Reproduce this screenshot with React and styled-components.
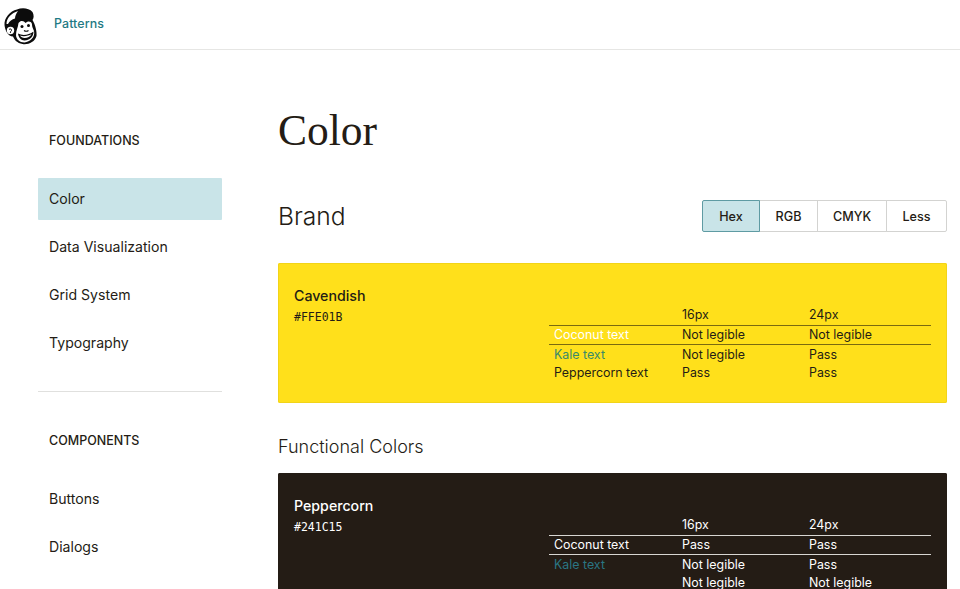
import React from 'react';
import styled, { createGlobalStyle } from 'styled-components';

const Global = createGlobalStyle`
  html, body { margin: 0; padding: 0; background: #fff; height: 100%; overflow: hidden; }
  body { font-family: Inter, "Liberation Sans", sans-serif; color: #241c15; }
`;
const Page = styled.div`width: 960px; height: 589px; overflow: hidden;`;
const Header = styled.header`
  height: 49px; border-bottom: 1px solid #e6e6e4; display: flex; align-items: center; gap: 14px;
`;
const Logo = styled.svg`width: 40px; height: 46px; display: block; flex: none; margin-top: 3px;`;
const HeaderLink = styled.a`font-size: 12.4px; font-weight: 500; color: #1f7a84; letter-spacing: 0.1px; margin-top: -3px;`;
const Body = styled.div`display: flex; padding: 0 13px 0 38px; gap: 56px;`;
const Side = styled.nav`width: 184px; flex: none; padding-top: 83px;`;
const SideHead = styled.h4`
  margin: 0; padding-left: 11px; font-size: 12.5px; line-height: 16px; font-weight: 500; color: #241c15;
`;
const SideList = styled.div`display: flex; flex-direction: column; gap: 6px; margin-top: 29px;`;
const SideItem = styled.a`
  height: 42px; box-sizing: border-box; display: flex; align-items: center; padding: 0 0 2px 11px; font-size: 14.1px; font-weight: 400; color: #241c15; border-radius: 1px;
  background: ${p => p.$active ? '#c9e4e8' : 'transparent'};
`;
const Rule = styled.hr`border: 0; border-top: 1px solid #e0e0de; margin: 27px 0 41px;`;
const Main = styled.main`flex: 1; min-width: 0; padding-top: 52px;`;
const Title = styled.h1`
  margin: 0; font-family: "Liberation Serif", serif; font-size: 43.5px; line-height: 56px; font-weight: 400; color: #241c15;
`;
const BrandRow = styled.div`display: flex; justify-content: space-between; align-items: center; margin-top: 42px; height: 32px;`;
const H2 = styled.h2`margin: 0; font-size: 24.6px; line-height: 32px; font-weight: 300; color: #241c15;`;
const Toggle = styled.div`display: flex;`;
const ToggleBtn = styled.button`
  height: 32px; width: ${p => p.$w}px; margin-left: -1px; padding: 0; box-sizing: border-box; font: 500 12.6px Inter, sans-serif; color: #241c15;
  background: ${p => p.$active ? '#c9e4e8' : '#fff'};
  border: 1px solid ${p => p.$active ? '#5f9ba3' : '#d3d3d1'};
  position: relative; z-index: ${p => p.$active ? 1 : 0};
  &:first-child { border-radius: 2px 0 0 2px; }
  &:last-child { border-radius: 0 2px 2px 0; }
`;
const Card = styled.section`
  margin-top: ${p => p.$mt}px; height: 140px; box-sizing: border-box; border-radius: 2px; background: ${p => p.$bg}; color: ${p => p.$fg};
  box-shadow: inset 0 0 0 1px ${p => p.$edge};
  padding: 23px 16px 0; display: grid; grid-template-columns: 1fr 382px;
`;
const CardName = styled.div`font-size: 14.2px; line-height: 19px; font-weight: 500;`;
const Hex = styled.div`font-family: "DejaVu Sans Mono", monospace; font-size: 11.5px; line-height: 14px; margin-top: 5px;`;
const CardHead = styled.div``;
const Table = styled.table`
  width: 382px; height: max-content; margin-top: 20px; border-collapse: collapse; font-size: 12.4px; font-weight: 400; table-layout: fixed;
  td { padding: 0 0 0 5px; height: 18.7px; line-height: 18px; }
  td:nth-child(1) { width: 123px; }
  td:nth-child(2) { width: 122px; }
`;
const Row = styled.tr`
  border-bottom: ${p => p.$line ? `1px solid ${p.$line}` : '0'};
`;
const Label = styled.td`color: ${p => p.$c};`;
const H3 = styled.h3`margin: 32px 0 0; font-size: 18px; line-height: 24px; font-weight: 300; color: #241c15;`;

const Monkey = () => (
  <Logo viewBox="0 0 40 46">
    <path d="M4.500 22C4 15 10 8 17 6.500C22 4.500 29 5 32.500 9C34 12 34 15 32.500 17C35.500 22 37 29 36.500 33C35 39 28 42 22.500 41C17 40 14.500 37 13 33.500C8 33.500 5 27.500 4.500 22Z" fill="#0c0c0c"/>
    <path d="M6.500 21C6.500 15 11.500 10 18 8C16 10.500 15 13.500 15 15.500C12 16.500 9.500 18 8 21Z" fill="#fff"/>
    <circle cx="10.500" cy="27.500" r="3.700" fill="#fff"/>
    <path d="M9 26.500C10 25.500 12 26 11.500 27.500C11 28.500 10 28.500 10.500 30" stroke="#0c0c0c" strokeWidth="1" fill="none"/>
    <path d="M18.500 20C20.500 17 24 17.500 25.500 20C27.500 17.500 32 18 32 21.500C32 24 33 25.500 34 28C35.500 34 30 39 24.500 39.500C19.500 39.500 16 36 16 32C16 27.500 18 24.500 18.500 20Z" fill="#fff"/>
    <path d="M18 30.500C22.500 33 29 32 33.500 28.500C33.500 34 29.500 37.500 24.500 37.500C21 37.500 18.500 34.500 18 30.500Z" fill="#0c0c0c"/>
    <path d="M20 32.500C23.500 33.800 28.500 33 31.500 31C30.500 33.500 27.500 35 24.500 35C22.500 35 20.800 34 20 32.500Z" fill="#fff"/>
    <circle cx="22" cy="23.500" r="1.500" fill="#0c0c0c"/>
    <circle cx="28.500" cy="22.500" r="1.500" fill="#0c0c0c"/>
    <path d="M24 27.500C25.500 28.500 27 28.500 28.500 27.500" stroke="#0c0c0c" strokeWidth="1.200" fill="none"/>
  </Logo>
);

const Contrast = ({ rows, line }) => (
  <Table>
    <tbody>
      <Row $line={line}><td></td><td>16px</td><td>24px</td></Row>
      {rows.map((r, i) => (
        <Row key={i} $line={i === 0 ? line : null}>
          <Label $c={r[3]}>{r[0]}</Label><td>{r[1]}</td><td>{r[2]}</td>
        </Row>
      ))}
    </tbody>
  </Table>
);

export default function App() {
  return (
    <Page>
      <Global />
      <Header><Monkey /><HeaderLink>Patterns</HeaderLink></Header>
      <Body>
        <Side>
          <SideHead>FOUNDATIONS</SideHead>
          <SideList>
            <SideItem $active>Color</SideItem>
            <SideItem>Data Visualization</SideItem>
            <SideItem>Grid System</SideItem>
            <SideItem>Typography</SideItem>
          </SideList>
          <Rule />
          <SideHead>COMPONENTS</SideHead>
          <SideList>
            <SideItem>Buttons</SideItem>
            <SideItem>Dialogs</SideItem>
          </SideList>
        </Side>
        <Main>
          <Title>Color</Title>
          <BrandRow>
            <H2>Brand</H2>
            <Toggle>
              <ToggleBtn $active $w={58}>Hex</ToggleBtn>
              <ToggleBtn $w={59}>RGB</ToggleBtn>
              <ToggleBtn $w={70}>CMYK</ToggleBtn>
              <ToggleBtn $w={61}>Less</ToggleBtn>
            </Toggle>
          </BrandRow>
          <Card $mt={31} $bg="#ffe01b" $fg="#241c15" $edge="#f2d418">
            <CardHead><CardName>Cavendish</CardName><Hex>#FFE01B</Hex></CardHead>
            <Contrast line="#7a6a10" rows={[
              ['Coconut text', 'Not legible', 'Not legible', '#fff'],
              ['Kale text', 'Not legible', 'Pass', '#3a8a6a'],
              ['Peppercorn text', 'Pass', 'Pass', '#241c15'],
            ]} />
          </Card>
          <H3>Functional Colors</H3>
          <Card $mt={14} $bg="#241c15" $fg="#fff" $edge="#241c15">
            <CardHead><CardName>Peppercorn</CardName><Hex>#241C15</Hex></CardHead>
            <Contrast line="#d8d6d2" rows={[
              ['Coconut text', 'Pass', 'Pass', '#fff'],
              ['Kale text', 'Not legible', 'Pass', '#2a7583'],
              ['', 'Not legible', 'Not legible', '#fff'],
            ]} />
          </Card>
        </Main>
      </Body>
    </Page>
  );
}
